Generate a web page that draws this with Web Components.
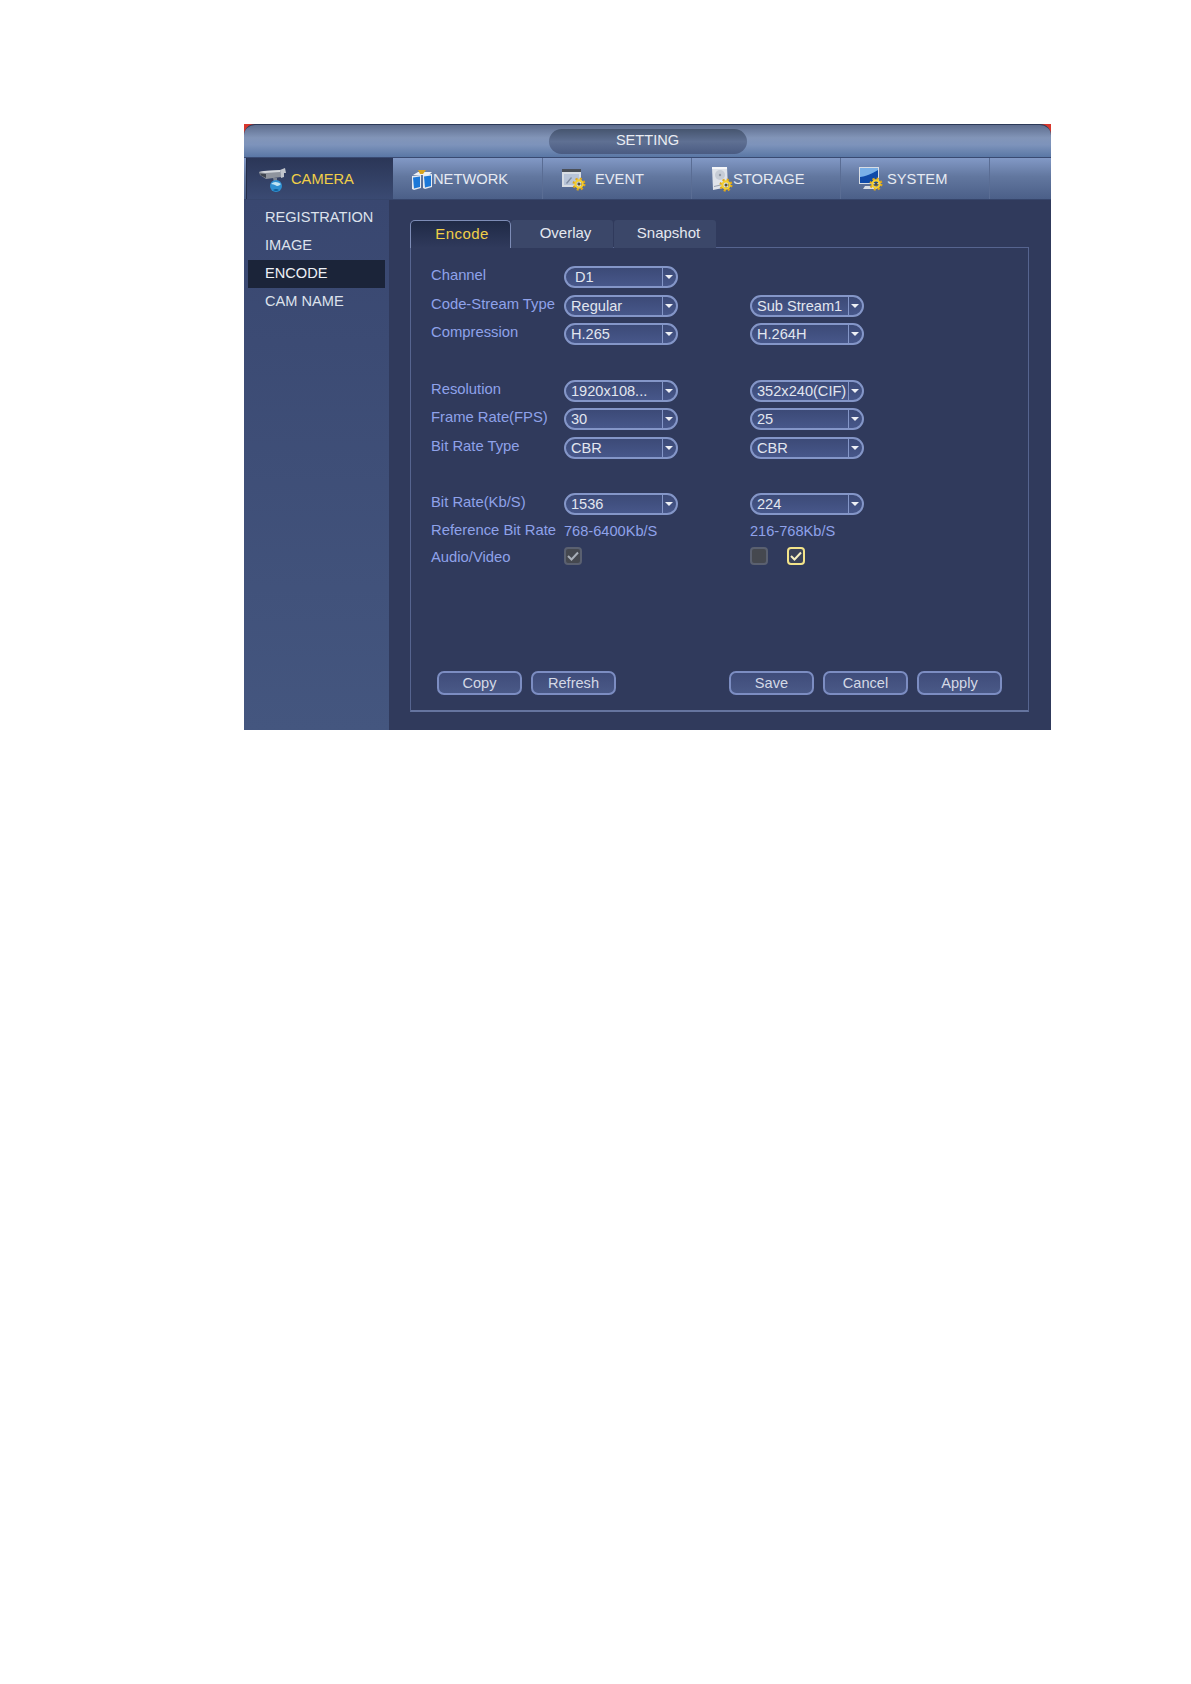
<!DOCTYPE html>
<html>
<head>
<meta charset="utf-8">
<title>SETTING</title>
<style>
  html, body { margin: 0; background: #fff; }
  body { padding: 124px 0 0 244px; height: 1560px; font-family: "Liberation Sans", Arial, sans-serif; }
</style>
</head>
<body>
<dvr-window heading="SETTING">
  <dvr-nav slot="nav" icon="camera" active style="--pad:12px;--gap:5px">CAMERA</dvr-nav>
  <dvr-nav slot="nav" icon="network" style="--pad:19px;--gap:0px;--w:150px">NETWORK</dvr-nav>
  <dvr-nav slot="nav" icon="event" style="--pad:19px;--gap:9px">EVENT</dvr-nav>
  <dvr-nav slot="nav" icon="storage" style="--pad:19px;--gap:0px">STORAGE</dvr-nav>
  <dvr-nav slot="nav" icon="system" style="--pad:18px;--gap:4px">SYSTEM</dvr-nav>

  <dvr-side slot="side">REGISTRATION</dvr-side>
  <dvr-side slot="side">IMAGE</dvr-side>
  <dvr-side slot="side" active>ENCODE</dvr-side>
  <dvr-side slot="side">CAM NAME</dvr-side>

  <dvr-subtab slot="tabs" active>Encode</dvr-subtab>
  <dvr-subtab slot="tabs">Overlay</dvr-subtab>
  <dvr-subtab slot="tabs">Snapshot</dvr-subtab>

  <dvr-row label="Channel"><dvr-select indent>D1</dvr-select></dvr-row>
  <dvr-row label="Code-Stream Type"><dvr-select>Regular</dvr-select><dvr-select slot="second">Sub Stream1</dvr-select></dvr-row>
  <dvr-row label="Compression"><dvr-select>H.265</dvr-select><dvr-select slot="second">H.264H</dvr-select></dvr-row>
  <dvr-row></dvr-row>
  <dvr-row label="Resolution"><dvr-select>1920x108...</dvr-select><dvr-select slot="second">352x240(CIF)</dvr-select></dvr-row>
  <dvr-row label="Frame Rate(FPS)"><dvr-select>30</dvr-select><dvr-select slot="second">25</dvr-select></dvr-row>
  <dvr-row label="Bit Rate Type"><dvr-select>CBR</dvr-select><dvr-select slot="second">CBR</dvr-select></dvr-row>
  <dvr-row></dvr-row>
  <dvr-row label="Bit Rate(Kb/S)"><dvr-select>1536</dvr-select><dvr-select slot="second">224</dvr-select></dvr-row>
  <dvr-row label="Reference Bit Rate" style="--h:27px"><span style="padding-bottom:3px">768-6400Kb/S</span><span slot="second" style="padding-bottom:3px">216-768Kb/S</span></dvr-row>
  <dvr-row label="Audio/Video" style="--h:26px"><dvr-check checked disabled></dvr-check><dvr-check slot="second" disabled></dvr-check><dvr-check slot="second" checked></dvr-check></dvr-row>

  <dvr-btn slot="left">Copy</dvr-btn>
  <dvr-btn slot="left">Refresh</dvr-btn>
  <dvr-btn slot="right">Save</dvr-btn>
  <dvr-btn slot="right">Cancel</dvr-btn>
  <dvr-btn slot="right">Apply</dvr-btn>
</dvr-window>

<script>
const windowTemplate = document.createElement("template");
windowTemplate.innerHTML = `
<style>
  :host {
    display: grid;
    grid-template-rows: 34px 42px 1fr;
    width: 807px;
    height: 606px;
    color: #dfe4ee;
    font: 14.6px "Liberation Sans", Arial, sans-serif;
    background: linear-gradient(#d8362c 0 10px, #303a5c 10px);
  }
  .title {
    display: flex;
    justify-content: center;
    align-items: center;
    border-radius: 11px 11px 0 0;
    border-top: 1px solid #2c3a58;
    border-bottom: 1px solid #394a72;
    box-sizing: border-box;
    background: linear-gradient(#5e6d8e 0, #8295b8 40%, #7d93bb 62%, #5a77a5 100%);
  }
  .pill {
    width: 198px;
    height: 25px;
    line-height: 22px;
    text-align: center;
    border-radius: 13px;
    color: #e9ecf2;
    background: linear-gradient(#46556f, #5f7093 50%, #4a5b82);
  }
  nav {
    display: flex;
    padding-left: 2px;
    background: linear-gradient(#8299c6, #62779f 45%, #4b5f88);
    border-bottom: 1px solid #36456b;
    box-sizing: border-box;
  }
  .body {
    display: grid;
    grid-template-columns: 145px 1fr;
    min-height: 0;
  }
  aside {
    display: flex;
    flex-direction: column;
    padding: 4px 4px 0;
    background: linear-gradient(#394770, #44567f);
  }
  main {
    display: flex;
    flex-direction: column;
    padding: 20px 22px 18px 21px;
    background: #303a5c;
    min-width: 0;
  }
  .tabs { display: flex; height: 28px; }
  .panel {
    flex: 1;
    display: flex;
    flex-direction: column;
    padding: 15px 0 0;
    border: 1px solid #56648f;
    border-bottom-width: 2px;
    border-bottom-color: #65749f;
    margin-top: -1px;
  }
  .foot {
    margin-top: auto;
    display: flex;
    justify-content: space-between;
    padding: 0 26px 15px 26px;
  }
  .group { display: flex; gap: 9px; }
</style>
<div class="title"><div class="pill"></div></div>
<nav><slot name="nav"></slot></nav>
<div class="body">
  <aside><slot name="side"></slot></aside>
  <main>
    <div class="tabs"><slot name="tabs"></slot></div>
    <div class="panel">
      <slot></slot>
      <div class="foot">
        <div class="group"><slot name="left"></slot></div>
        <div class="group"><slot name="right"></slot></div>
      </div>
    </div>
  </main>
</div>
`;

class DvrWindow extends HTMLElement {
  constructor() {
    super();
    const shadow = this.attachShadow({ mode: "open" });
    shadow.append(windowTemplate.content.cloneNode(true));
    shadow.querySelector(".pill").textContent = this.getAttribute("heading");
  }
}

// one small gear, all the menu icons except camera and network wear it
const gear = (x, y) => `
  <g transform="translate(${x} ${y})">
    <circle r="5" fill="none" stroke="#e0a818" stroke-width="3" stroke-dasharray="2 1.93"/>
    <circle r="3.6" fill="none" stroke="#f4cf30" stroke-width="2.2"/>
    <circle r="1.5" fill="#5a5030"/>
  </g>`;

const icons = {
  camera: `<svg width="27" height="25" viewBox="0 0 27 25">
    <path d="M0 5l5-1 16-1 1 7-15 2-6-4z" fill="#8f949d"/>
    <path d="M0 5l5-1 16-1 0 2-15 1z" fill="#d5d8dd"/>
    <path d="M1 6.500l6 .5 0 4-5-2.500z" fill="#3f4550"/>
    <path d="M21 3l5-2 1 5-2 0 0 4-3 1z" fill="#c0c4cb"/>
    <path d="M14 11l4 0 0 4-3 0z" fill="#7e8591"/>
    <circle cx="17" cy="19" r="6" fill="#2e8fd0"/>
    <path d="M12 17q4-4 10 0-3 3-5 1.500t-5-1.500z" fill="#bfe4f4"/>
    <path d="M14 23q3 2 6 0-3-2-6 0z" fill="#0f5f9a"/>
  </svg>`,
  network: `<svg width="21" height="24" viewBox="0 0 21 24">
    <path d="M1 8l5-3h14l-3 3z" fill="#eef1f6"/>
    <path d="M6 3h8l-3 4H8z" fill="#d9a520"/>
    <path d="M0 9l9-1v13l-7 2-2-1z" fill="#e6eaf0"/>
    <path d="M1 10.500l7-1v10.500l-6 1.500z" fill="#1c78d8"/>
    <path d="M11 8l9-1v13l-7 2-2-1z" fill="#e6eaf0"/>
    <path d="M12 9.500l7-1v10.500l-6 1.500z" fill="#1c78d8"/>
  </svg>`,
  event: `<svg width="24" height="24" viewBox="0 0 24 24">
    <path d="M0 2h19v4H0z" fill="#4a4f58"/>
    <path d="M0 5h19v15H0z" fill="#d8dde4"/>
    <path d="M2 7h15v11H2z" fill="#b8c4d8"/>
    <path d="M4 16l5-6 1 1-5 6z" fill="#7f8ba0"/>
    ${gear(17, 17)}
  </svg>`,
  storage: `<svg width="22" height="26" viewBox="0 0 22 26">
    <path d="M1 1h15l1 20-15 3z" fill="#dfe3ea"/>
    <path d="M1 1h15v2H1z" fill="#f6f7f9"/>
    <circle cx="9" cy="9" r="5" fill="#c6ccd6"/>
    <circle cx="9" cy="9" r="1.2" fill="#8f97a4"/>
    <path d="M3 20l9-2v1l-9 2z" fill="#98a0ae"/>
    ${gear(15, 19)}
  </svg>`,
  system: `<svg width="24" height="26" viewBox="0 0 24 26">
    <path d="M0 1h20v17H0z" fill="#d8dde4"/>
    <path d="M1 2h18v15H1z" fill="#1c6fd0"/>
    <path d="M1 11q8-1 18-7v13H1z" fill="#0f4aa8"/>
    <path d="M1 2h18v2q-10 6-18 7z" fill="#79b0e8"/>
    <path d="M6 20h10l2 3H4z" fill="#d8dde4"/>
    ${gear(17, 18)}
  </svg>`,
};

const navTemplate = document.createElement("template");
navTemplate.innerHTML = `
<style>
  :host {
    display: flex;
    align-items: center;
    box-sizing: border-box;
    width: var(--w, 149px);
    height: 41px;
    padding-left: var(--pad, 19px);
    gap: var(--gap, 0);
    font-size: 14.7px;
    color: #e6eaf2;
    border-right: 1px solid #5a6d94;
  }
  :host([active]) {
    width: 147px;
    color: #f0cf48;
    border-right: 0;
    border-left: 1px solid #232c48;
    background: linear-gradient(#2b3657, #3a4a72);
  }
  svg { display: block; flex: none; }
  .icon { padding-top: 1px; }
</style>
<span class="icon"></span><span class="text"><slot></slot></span>
`;

class DvrNav extends HTMLElement {
  constructor() {
    super();
    const shadow = this.attachShadow({ mode: "open" });
    shadow.append(navTemplate.content.cloneNode(true));
    shadow.querySelector(".icon").innerHTML = icons[this.getAttribute("icon")];
  }
}

const sideTemplate = document.createElement("template");
sideTemplate.innerHTML = `
<style>
  :host {
    display: block;
    height: 28px;
    line-height: 27px;
    padding-left: 17px;
    color: #dde2ec;
  }
  :host([active]) { background: #1b2439; color: #eef1f6; }
</style>
<slot></slot>
`;

class DvrSide extends HTMLElement {
  constructor() {
    super();
    this.attachShadow({ mode: "open" }).append(sideTemplate.content.cloneNode(true));
  }
}

const subtabTemplate = document.createElement("template");
subtabTemplate.innerHTML = `
<style>
  :host {
    display: block;
    box-sizing: border-box;
    width: 102px;
    height: 28px;
    line-height: 26px;
    padding-left: 7px;
    text-align: center;
    font-size: 15px;
    color: #e4e8f0;
    background: #3b4769;
    border-radius: 3px 3px 0 0;
    margin-right: 1px;
    position: relative;
  }
  :host([active]) {
    width: 101px;
    margin-right: 0;
    padding-left: 3px;
    letter-spacing: .4px;
    color: #f0cf48;
    background: linear-gradient(#1f2a46, #303a5c);
    border: 1px solid #7d8cb6;
    border-bottom: 0;
    border-radius: 5px 5px 0 0;
    line-height: 25px;
    z-index: 1;
  }
</style>
<slot></slot>
`;

class DvrSubtab extends HTMLElement {
  constructor() {
    super();
    this.attachShadow({ mode: "open" }).append(subtabTemplate.content.cloneNode(true));
  }
}

const rowTemplate = document.createElement("template");
rowTemplate.innerHTML = `
<style>
  :host {
    display: grid;
    grid-template-columns: 133px 186px 1fr;
    align-items: center;
    height: var(--h, 28.4px);
    padding-left: 20px;
    color: #8fa2ea;
  }
  .label { padding-bottom: 4px; white-space: nowrap; font-size: 14.8px; }
  .cell { display: flex; align-items: center; gap: 19px; }
</style>
<div class="label"></div>
<div class="cell"><slot></slot></div>
<div class="cell"><slot name="second"></slot></div>
`;

class DvrRow extends HTMLElement {
  constructor() {
    super();
    const shadow = this.attachShadow({ mode: "open" });
    shadow.append(rowTemplate.content.cloneNode(true));
    shadow.querySelector(".label").textContent = this.getAttribute("label") || "";
  }
}

const selectTemplate = document.createElement("template");
selectTemplate.innerHTML = `
<style>
  :host {
    display: flex;
    box-sizing: border-box;
    width: 114px;
    height: 22px;
    border: 2px solid #8496c8;
    border-radius: 11px;
    color: #e2e6ef;
    background: linear-gradient(#3c4a77, #47578a);
    line-height: 18px;
    overflow: hidden;
  }
  :host([indent]) .value { padding-left: 9px; }
  .value { flex: 1; padding-left: 5px; white-space: nowrap; overflow: hidden; }
  .arrow {
    flex: none;
    box-sizing: border-box;
    width: 14px;
    display: flex;
    align-items: center;
    justify-content: center;
    border-left: 1px solid #8496c8;
    padding-right: 1px;
  }
  .arrow i {
    border: 4px solid transparent;
    border-top: 4.5px solid #eef0f5;
    border-bottom: 0;
  }
</style>
<div class="value"><slot></slot></div>
<div class="arrow"><i></i></div>
`;

class DvrSelect extends HTMLElement {
  constructor() {
    super();
    this.attachShadow({ mode: "open" }).append(selectTemplate.content.cloneNode(true));
  }
}

const checkTemplate = document.createElement("template");
checkTemplate.innerHTML = `
<style>
  :host {
    display: flex;
    align-items: center;
    justify-content: center;
    box-sizing: border-box;
    width: 18px;
    height: 18px;
    margin-bottom: 5px;
    border: 2px solid #f3e48a;
    border-radius: 4px;
    background: #3a4258;
  }
  :host([disabled]) { border-color: #5a6070; background: #45484f; }
  svg { display: none; }
  :host([checked]) svg { display: block; }
  :host([disabled]) path { stroke: #a8aeb8; }
</style>
<svg width="12" height="10" viewBox="0 0 12 10"><path d="M1 5l3.5 3.5L11 1.5" fill="none" stroke="#f6f0c0" stroke-width="2"/></svg>
`;

class DvrCheck extends HTMLElement {
  constructor() {
    super();
    this.attachShadow({ mode: "open" }).append(checkTemplate.content.cloneNode(true));
  }
}

const btnTemplate = document.createElement("template");
btnTemplate.innerHTML = `
<style>
  :host {
    display: block;
    box-sizing: border-box;
    width: 85px;
    height: 24px;
    line-height: 21px;
    text-align: center;
    color: #d4d9e6;
    border: 2px solid #7c8dc2;
    border-radius: 7px;
    background: linear-gradient(#3f4c7a, #4a5987);
  }
</style>
<slot></slot>
`;

class DvrBtn extends HTMLElement {
  constructor() {
    super();
    this.attachShadow({ mode: "open" }).append(btnTemplate.content.cloneNode(true));
  }
}

customElements.define("dvr-window", DvrWindow);
customElements.define("dvr-nav", DvrNav);
customElements.define("dvr-side", DvrSide);
customElements.define("dvr-subtab", DvrSubtab);
customElements.define("dvr-row", DvrRow);
customElements.define("dvr-select", DvrSelect);
customElements.define("dvr-check", DvrCheck);
customElements.define("dvr-btn", DvrBtn);
</script>
</body>
</html>
